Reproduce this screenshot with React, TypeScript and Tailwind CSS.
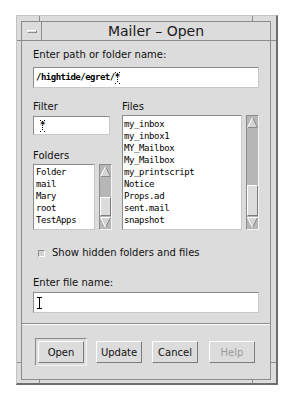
import React from "react";

const sans = "font-['DejaVu_Sans',sans-serif]";
const mono = "font-['DejaVu_Sans_Mono',monospace]";

function Arrow({ up }: { up: boolean }) {
  return (
    <div className="h-[13px] flex items-center justify-center shrink-0">
      <svg width="11" height="11" viewBox="0 0 11 11">
        {up ? (
          <>
            <polygon points="5.5,0.5 10.5,10.5 0.5,10.5" fill="#d4d4d4" />
            <polyline points="5.5,0.5 10.5,10.5 0.5,10.5" stroke="#8c8c8c" fill="none" />
            <polyline points="0.5,10.5 5.5,0.5" stroke="#ffffff" fill="none" />
          </>
        ) : (
          <>
            <polygon points="0.5,0.5 10.5,0.5 5.5,10.5" fill="#d4d4d4" />
            <polyline points="10.5,0.5 5.5,10.5" stroke="#8c8c8c" fill="none" />
            <polyline points="5.5,10.5 0.5,0.5 10.5,0.5" stroke="#ffffff" fill="none" />
          </>
        )}
      </svg>
    </div>
  );
}

function ScrollBar({ thumb }: { thumb: number }) {
  return (
    <div className="w-[13px] h-full flex flex-col bg-[#b6b6b6] border border-t-[#8c8c8c] border-l-[#8c8c8c] border-r-[#f4f4f4] border-b-[#f4f4f4] shrink-0">
      <Arrow up />
      <div className="flex-1 flex flex-col justify-end">
        <div
          className="w-full bg-[#dcdcdc] border border-t-white border-l-white border-r-[#7c7c7c] border-b-[#7c7c7c]"
          style={{ height: thumb }}
        />
      </div>
      <Arrow up={false} />
    </div>
  );
}

function DottedCaret() {
  const dots = [];
  for (let y = 1; y < 11; y += 2) dots.push(<rect key={y} x="2" y={y} width="1" height="1" fill="#000" />);
  return (
    <svg width="5" height="12" viewBox="0 0 5 12" className="inline-block align-middle -ml-[5px]">
      <rect x="0" y="0" width="1" height="1" fill="#000" />
      <rect x="4" y="0" width="1" height="1" fill="#000" />
      {dots}
      <rect x="0" y="11" width="1" height="1" fill="#000" />
      <rect x="4" y="11" width="1" height="1" fill="#000" />
    </svg>
  );
}

const field =
  "bg-white border border-t-[#8c8c8c] border-l-[#8c8c8c] border-r-[#c8c8c8] border-b-[#c8c8c8]";

function Label({ children }: { children: React.ReactNode }) {
  return <div className={`${sans} text-[10px] leading-[12px] h-[12px] text-[#111]`}>{children}</div>;
}

function Button({ children, disabled }: { children: React.ReactNode; disabled?: boolean }) {
  return (
    <div
      className={`w-[46px] h-[22px] flex items-center justify-center bg-[#dcdcdc] border border-t-white border-l-white border-r-[#7c7c7c] border-b-[#7c7c7c] ${sans} text-[10px] ${
        disabled ? "text-[#9a9a9a]" : "text-[#111]"
      }`}
    >
      {children}
    </div>
  );
}

export default function App() {
  const files = [
    "my_inbox",
    "my_inbox1",
    "MY_Mailbox",
    "My_Mailbox",
    "my_printscript",
    "Notice",
    "Props.ad",
    "sent.mail",
    "snapshot",
  ];
  const folders = ["Folder", "mail", "Mary", "root", "TestApps"];
  const notch = "absolute bg-[#8c8c8c]";
  return (
    <div className="w-[292px] h-[401px] bg-white overflow-hidden">
      <div className="relative ml-[16px] mt-[15px] w-[262px] h-[370px] bg-[#dcdcdc] border-l border-t border-l-[#c4c4c4] border-t-[#c4c4c4] border-r-2 border-b-2 border-r-[#6e6e6e] border-b-[#6e6e6e] pl-[4px] pt-[5px] pr-[5px] pb-[3px]">
        {/* frame notches */}
        <div className={`${notch} left-[22px] top-0 w-px h-[5px]`} />
        <div className={`${notch} left-[235px] top-0 w-px h-[5px]`} />
        <div className={`${notch} left-[22px] bottom-0 w-px h-[3px]`} />
        <div className={`${notch} left-[235px] bottom-0 w-px h-[3px]`} />
        <div className={`${notch} left-0 top-[24px] w-[4px] h-px`} />
        <div className={`${notch} right-0 top-[24px] w-[5px] h-px`} />
        <div className={`${notch} left-0 top-[346px] w-[4px] h-px`} />
        <div className={`${notch} right-0 top-[346px] w-[5px] h-px`} />

        <div className="w-full h-full border border-[#8c8c8c] flex flex-col">
          {/* title bar */}
          <div className="h-[19px] flex border-b border-[#8c8c8c] shrink-0">
            <div className="w-[20px] h-full border-r border-[#8c8c8c] flex items-center justify-center">
              <div className="w-[10px] h-[3px] bg-[#dcdcdc] border-t border-l border-white border-r border-b border-r-[#8c8c8c] border-b-[#8c8c8c]" />
            </div>
            <div className={`flex-1 flex items-center justify-center ${sans} text-[14px] leading-[18px] text-[#1a1a1a]`}>
              Mailer – Open
            </div>
          </div>

          {/* client */}
          <div className="flex-1 flex flex-col">
            <div className="px-[11px] pt-[8px] flex flex-col">
              <Label>Enter path or folder name:</Label>
              <div className={`${field} mt-[6px] h-[21px] flex items-center pl-[2px]`}>
                <span className={`${mono} font-bold text-[9px] tracking-[-0.5px] text-black`}>/hightide/egret/*</span>
                <DottedCaret />
              </div>

              <div className="mt-[13px] flex">
                <div className="w-[79px] flex flex-col">
                  <Label>Filter</Label>
                  <div className={`${field} mt-[3px] w-[77px] h-[19px] flex items-center pl-[6px]`}>
                    <span className={`${mono} font-bold text-[9px] text-black`}>*</span>
                    <DottedCaret />
                  </div>
                  <div className="mt-[15px]">
                    <Label>Folders</Label>
                  </div>
                  <div className="mt-[2px] h-[66px] flex gap-[4px]">
                    <div className={`${field} w-[62px] h-full pt-[1px] pl-[2px] overflow-hidden`}>
                      {folders.map((f) => (
                        <div key={f} className={`${mono} text-[9px] tracking-[-0.4px] leading-[12px] text-black whitespace-nowrap`}>
                          {f}
                        </div>
                      ))}
                    </div>
                    <ScrollBar thumb={19} />
                  </div>
                </div>
                <div className="ml-[10px] flex-1 flex flex-col">
                  <Label>Files</Label>
                  <div className="mt-[2px] h-[115px] flex gap-[4px]">
                    <div className={`${field} w-[120px] h-full pt-[2px] pl-[1px] overflow-hidden`}>
                      {files.map((f) => (
                        <div key={f} className={`${mono} text-[9px] tracking-[-0.4px] leading-[12px] text-black whitespace-nowrap`}>
                          {f}
                        </div>
                      ))}
                    </div>
                    <ScrollBar thumb={31} />
                  </div>
                </div>
              </div>

              <div className="mt-[17px] h-[12px] flex items-center pl-[5px]">
                <div className="w-[7px] h-[7px] border border-t-[#8c8c8c] border-l-[#8c8c8c] border-r-white border-b-white bg-[#d4d4d4]" />
                <div className={`ml-[7px] ${sans} text-[10px] leading-[12px] text-[#111]`}>Show hidden folders and files</div>
              </div>

              <div className="mt-[18px]">
                <Label>Enter file name:</Label>
              </div>
              <div className={`${field} mt-[3px] h-[21px] flex items-center pl-[2px]`}>
                <svg width="7" height="12" viewBox="0 0 7 12">
                  <line x1="3.5" y1="0.5" x2="3.5" y2="11.5" stroke="#000" />
                  <line x1="1" y1="0.5" x2="6" y2="0.5" stroke="#000" />
                  <line x1="1" y1="11.5" x2="6" y2="11.5" stroke="#000" />
                </svg>
              </div>
            </div>

            {/* separator */}
            <div className="mt-[10px] h-[2px] border-t border-t-[#8c8c8c] border-b border-b-white" />

            {/* buttons */}
            <div className="mt-[13px] pl-[13px] flex items-center">
              <div className="w-[52px] h-[28px] border border-t-[#8c8c8c] border-l-[#8c8c8c] border-r-[#f4f4f4] border-b-[#f4f4f4] flex items-center justify-center">
                <Button>Open</Button>
              </div>
              <div className="ml-[9px]">
                <Button>Update</Button>
              </div>
              <div className="ml-[10px]">
                <Button>Cancel</Button>
              </div>
              <div className="ml-[11px]">
                <Button disabled>Help</Button>
              </div>
            </div>
          </div>
        </div>
      </div>
    </div>
  );
}
